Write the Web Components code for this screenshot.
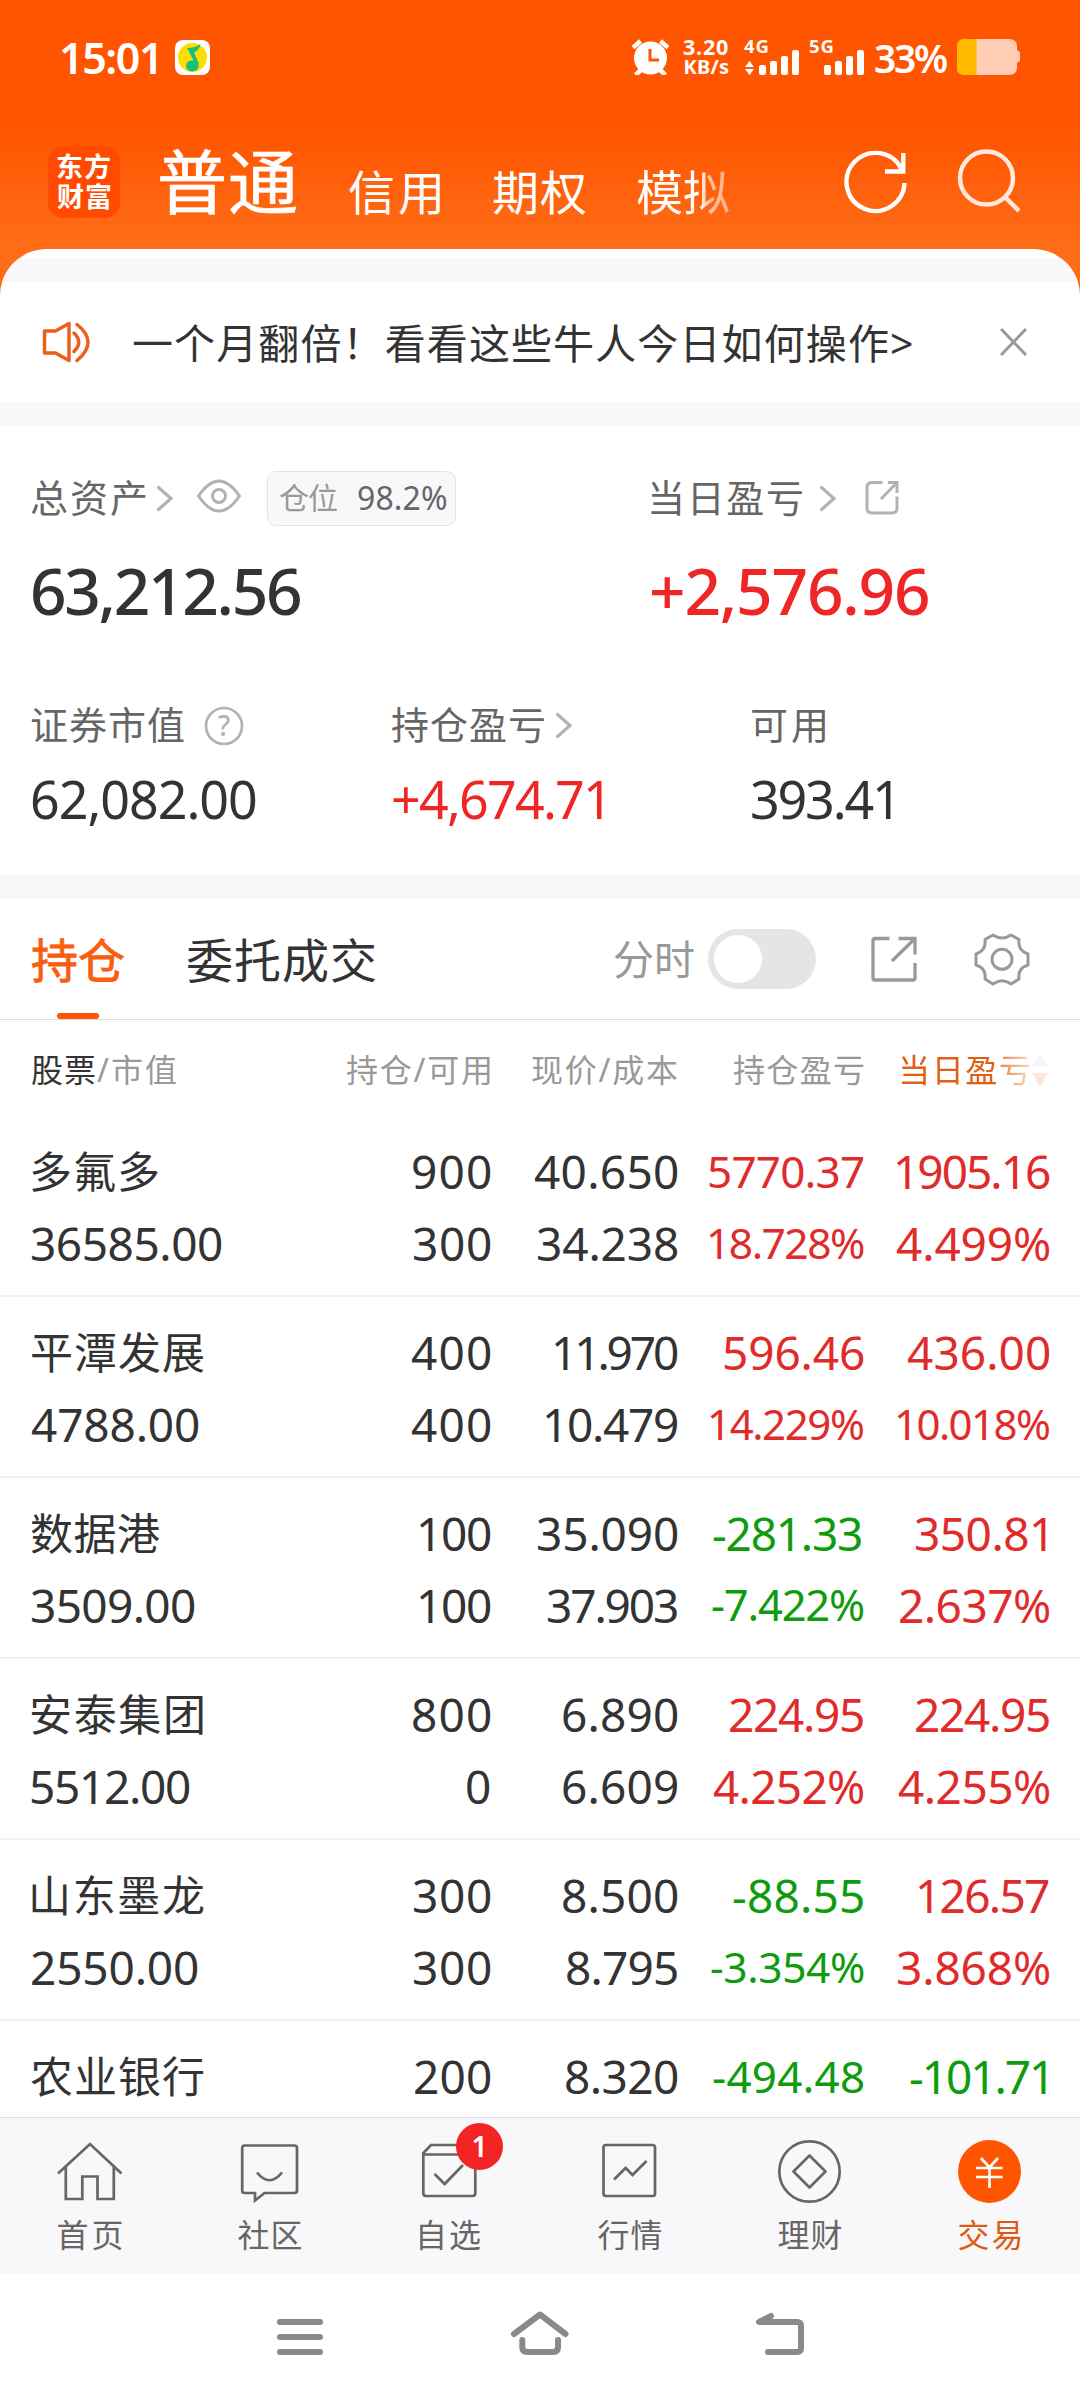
<!DOCTYPE html>
<html lang="zh-CN">
<head>
<meta charset="utf-8">
<title>持仓</title>
<style>
html,body{margin:0;padding:0;background:#fff}
body{width:1080px;height:2400px;overflow:hidden;font-family:"Noto Sans","Noto Sans CJK SC",sans-serif;color:#333}
</style>
</head>
<body>
<trade-app></trade-app>
<script>
function define(name, html, setup){
  const t=document.createElement('template');t.innerHTML=html;
  customElements.define(name,class extends HTMLElement{
    constructor(){super();this.attachShadow({mode:'open'}).append(t.content.cloneNode(true));}
    connectedCallback(){if(setup&&!this.ready){this.ready=true;setup(this,this.shadowRoot);}}
  });
}
const cv=document.createElement('canvas');cv.width=140;cv.height=120;
const cx=cv.getContext('2d',{willReadFrequently:true});
const cache=new Map();
/* Side bearings of one glyph, read from its drawn pixels. */
function bearings(font,ch){
  const key=font+ch;
  if(cache.has(key))return cache.get(key);
  cx.font=font;cx.clearRect(0,0,140,120);cx.fillStyle='#000';cx.fillText(ch,20,90);
  const d=cx.getImageData(0,0,140,120).data;let l=140,r=0;
  for(let y=0;y<120;y++)for(let x=0;x<140;x++)if(d[(y*140+x)*4+3]>90){if(x<l)l=x;if(x+1>r)r=x+1;}
  const res=[l-20,cx.measureText(ch).width-(r-20)];
  cache.set(key,res);return res;
}

/* Text whose box is exactly the ink of its glyphs, spaced to the width in "w". */
define('fit-text','<style>:host{display:block;line-height:1;white-space:nowrap;flex:none}span{display:block;font-kerning:none}</style><span><slot></slot></span>',(el,root)=>{
  const s=getComputedStyle(el),txt=el.textContent,w=+el.getAttribute('w');
  const font=`${s.fontWeight} ${s.fontSize} ${s.fontFamily}`,ch=[...txt],n=ch.length;
  if(!n)return;
  cx.font=font;
  let adv=0;for(const c of ch)adv+=cx.measureText(c).width;
  const l=bearings(font,ch[0])[0],rb=bearings(font,ch[n-1])[1];
  const ls=n>1?(w-(adv-l-rb))/(n-1):0,sp=root.querySelector('span');
  sp.style.letterSpacing=ls+'px';
  sp.style.marginLeft=-l+'px';
  el.style.width=w+'px';
});

define('status-bar',`<style>
:host{display:flex;align-items:center;height:114px;padding:0 60px 0 62px;color:#fff;box-sizing:border-box}
.clock{font-size:43px;font-weight:600}
.app{margin-left:19px}.space{flex:1}
.net{display:flex;flex-direction:column;align-items:flex-end;gap:0;margin:0 16px 0 15px;font-weight:700}
.net fit-text{line-height:20px;font-size:21.500px}.net .u{font-size:20px}
.g{font:700 18.500px "Noto Sans",sans-serif}
.pct{font-size:39px;font-weight:600;margin:0 10px 0 11px}
svg{display:block;flex:none}
</style>
<fit-text class="clock" w="94">15:01</fit-text>
<svg class="app" width="35" height="35" viewBox="175 39 35 35"><rect x="175" y="39" width="35" height="35" rx="8" fill="#fff"/><circle cx="192.500" cy="56.500" r="14.500" fill="#fedd00"/><path d="M187 47Q195 47 200.500 43Q199.500 49 194 51.500L198.500 61.500Q200 69.500 192.500 70.500Q186 70 186 64.500Q187 59 193.500 59.500Z" fill="#16c07c"/></svg>
<div class="space"></div>
<svg width="37" height="36" viewBox="632 39 37 36"><g stroke="#fff" stroke-width="4.500"><path d="M633 47.500L640.500 41M668 47.500L660.500 41M642 69L635.500 75M659 69L665.500 75"/></g><circle cx="650.500" cy="58" r="16.500" fill="#fff"/><path d="M650 49V60H659" fill="none" stroke="#ff5500" stroke-width="3"/></svg>
<div class="net"><fit-text w="44">3.20</fit-text><fit-text class="u" w="42.500">KB/s</fit-text></div>
<svg width="55" height="52" viewBox="744 31 55 52" fill="#fff"><text class="g" x="744" y="53" textLength="25">4G</text><path d="M745 67L749.500 61L754 67ZM745 69H754L749.500 75Z"/><rect x="759" y="65" width="7" height="10" rx="2"/><rect x="770" y="61" width="7" height="14" rx="2"/><rect x="781" y="56" width="7" height="19" rx="2"/><rect x="792" y="50" width="7" height="25" rx="2"/></svg>
<svg style="margin-left:10px" width="55" height="52" viewBox="809 31 55 52" fill="#fff"><text class="g" x="809" y="53" textLength="25">5G</text><rect x="824" y="65" width="7" height="10" rx="2"/><rect x="835" y="61" width="7" height="14" rx="2"/><rect x="846" y="56" width="7" height="19" rx="2"/><rect x="857" y="50" width="7" height="25" rx="2"/></svg>
<fit-text class="pct" w="72">33%</fit-text>
<svg width="63" height="36" viewBox="957 39 63 36"><path d="M965 39H1009Q1017 39 1017 47V50L1020 52V61L1017 63V67Q1017 75 1009 75H965Q957 75 957 67V47Q957 39 965 39Z" fill="#ffccb5"/><path d="M976.500 39H965Q957 39 957 47V67Q957 75 965 75H976.500Z" fill="#ffb900"/></svg>`);

define('app-header',`<style>
:host{display:flex;align-items:center;height:135px;padding:0 60px 0 48px;box-sizing:border-box;color:#fff}
.logo{width:72px;height:72px;border-radius:15px;background:#ff4a00;display:flex;flex-direction:column;align-items:center;justify-content:center;gap:3px;font-size:27px;font-weight:700;margin-right:40px}
.main{font-size:70px;-webkit-text-stroke:.7px #fff}
.sub{font-size:47px;padding-top:22px}
.fade{-webkit-mask-image:linear-gradient(90deg,#000 64%,rgba(0,0,0,.6) 80%,rgba(0,0,0,.5));mask-image:linear-gradient(90deg,#000 64%,rgba(0,0,0,.6) 80%,rgba(0,0,0,.5))}
.space{flex:1}svg{display:block;flex:none}
</style>
<div class="logo"><fit-text w="52">东方</fit-text><fit-text w="52">财富</fit-text></div>
<fit-text class="main" w="136">普通</fit-text>
<fit-text class="sub" w="90" style="margin-left:54px">信用</fit-text>
<fit-text class="sub" w="91" style="margin-left:54px">期权</fit-text>
<fit-text class="sub fade" w="91" style="margin-left:53px">模拟</fit-text>
<div class="space"></div>
<svg width="64" height="68" viewBox="844 148 64 68" fill="none" stroke="#fff" stroke-width="4.300"><path d="M904.500 183A29 29 0 1 1 901.500 169M903.300 153V171.500H885"/></svg>
<svg style="margin-left:49px" width="63" height="68" viewBox="957 148 63 68" fill="none" stroke="#ffe8dc" stroke-width="4.500"><circle cx="986.500" cy="178" r="26.500"/><path d="M1005.500 197.500L1019 211"/></svg>`);

define('notice-bar',`<style>
:host{display:flex;align-items:center;height:120px;padding:0 53px 0 42px;box-sizing:border-box;font-size:41px}
fit-text{margin-left:44px;padding-top:3px}.space{flex:1}svg{display:block}
</style>
<svg width="48" height="44" viewBox="42 320 48 44" fill="none" stroke="#ea5f1a" stroke-width="3.500" stroke-linejoin="round" stroke-linecap="round"><path d="M44.500 331H55.500L69 323.500V360.500L55.500 353H44.500ZM74 333Q83.500 342 74 351.500M77 324.500Q99 342 77 360.500"/></svg>
<fit-text w="778"></fit-text>
<div class="space"></div>
<svg width="27" height="28" viewBox="1000 329 27 28" stroke="#999" stroke-width="3"><path d="M1001 330L1026 356M1026 330L1001 356"/></svg>`,(el,root)=>{
  const f=root.querySelector('fit-text');f.textContent=el.getAttribute('text');f.ready=false;f.connectedCallback();
});

define('asset-panel',`<style>
:host{display:block;height:449px;padding:42px 0 0 32px;box-sizing:border-box;color:#333}
.top{display:grid;grid-template-columns:619px 1fr}
.low{display:grid;grid-template-columns:360px 360px 1fr;margin-top:61px}
.lab{display:flex;align-items:center;height:60px;color:#666;font-size:38px}
.lab>fit-text{padding-bottom:2px}
.lab svg{flex:none}
.big{display:flex;align-items:center;height:126px;font-size:64px;font-weight:500}
.top .big fit-text{margin-left:1px}
.low .lab{height:74px;margin-top:-28px;padding-top:1px;box-sizing:border-box}
.num{display:flex;align-items:center;height:76px;font-size:52px}
.red{color:#ee2726}
.pos{display:flex;align-items:center;justify-content:space-between;box-sizing:border-box;width:189px;height:55px;border:1.500px solid #e4e4e6;border-radius:9px;background:#f8f8fb;padding:0 9px 1px 12px;margin-left:25px;font-size:30px;color:#999}
.pos .p{font-size:32px;color:#666}
</style>
<div class="top">
 <div><div class="lab"><fit-text w="113">总资产</fit-text>
 <svg style="margin-left:11px" width="18" height="30" viewBox="156 483 18 30" fill="none" stroke="#b2b2b2" stroke-width="3.200" stroke-linecap="round"><path d="M158.500 487.500L171 498.500L158.500 509.500"/></svg>
 <svg style="margin-left:22px;margin-bottom:4px" width="46" height="34" viewBox="196 480 46 34" fill="none" stroke="#b2b2b2" stroke-width="3"><path d="M198.500 497Q219 467 239.500 497Q219 527 198.500 497Z" stroke-linejoin="round"/><circle cx="219" cy="497" r="6.500"/></svg>
 <div class="pos"><fit-text w="57">仓位</fit-text><fit-text class="p" w="87">98.2%</fit-text></div></div>
 <div class="big"><fit-text w="267">63,212.56</fit-text></div></div>
 <div><div class="lab"><fit-text w="151">当日盈亏</fit-text>
 <svg style="margin-left:17px" width="18" height="30" viewBox="819 483 18 30" fill="none" stroke="#b2b2b2" stroke-width="3.200" stroke-linecap="round"><path d="M821.500 487.500L834 498.500L821.500 509.500"/></svg>
 <svg style="margin-left:27px" width="36" height="36" viewBox="864 480 36 36" fill="none" stroke="#b2b2b2" stroke-width="3"><path d="M882.500 482.500H872Q867 482.500 867 487.500V508Q867 513 872 513H892Q897 513 897 508V496.500M888 482.500H897V493M897 482.500L881 499"/></svg></div>
 <div class="big red"><fit-text w="276">+2,576.96</fit-text></div></div>
</div>
<div class="low">
 <div><div class="lab"><fit-text w="152">证券市值</fit-text>
 <svg style="margin-left:20px;margin-top:2px" width="40" height="40" viewBox="204 706 40 40"><circle cx="224" cy="726" r="18" fill="none" stroke="#b2b2b2" stroke-width="2.700"/><text x="224" y="736" text-anchor="middle" font-size="28" font-weight="500" fill="#b2b2b2">?</text></svg></div>
 <div class="num"><fit-text w="222" style="margin-left:1px">62,082.00</fit-text></div></div>
 <div><div class="lab"><fit-text w="152">持仓盈亏</fit-text>
 <svg style="margin-left:11px" width="18" height="30" viewBox="156 483 18 30" fill="none" stroke="#b2b2b2" stroke-width="3.200" stroke-linecap="round"><path d="M158.500 487.500L171 498.500L158.500 509.500"/></svg></div>
 <div class="num red"><fit-text w="209" style="margin-left:1px">+4,674.71</fit-text></div></div>
 <div><div class="lab"><fit-text w="73">可用</fit-text></div>
 <div class="num"><fit-text w="139">393.41</fit-text></div></div>
</div>`);

define('hold-tabs',`<style>
:host{display:flex;height:121px;padding:0 49px 0 32px;box-sizing:border-box;border-bottom:1.500px solid #ddd;align-items:stretch;font-size:47px}
.tab{display:flex;flex-direction:column;align-items:center;justify-content:flex-end;margin-right:65px}
.tab fit-text{margin-bottom:29px}
.bar{width:42px;height:6px;border-radius:3px;background:#ff5500}
.tab:not(.on) .bar{background:transparent}
.on{color:#f95d10;-webkit-text-stroke:.8px #f95d10}.space{flex:1}
.tools{display:flex;align-items:center;color:#999;font-size:41px}
.sw{width:108px;height:60px;border-radius:30px;background:#e5e5e7;padding:6px;box-sizing:border-box;margin-left:14px}
.sw i{display:block;width:48px;height:48px;border-radius:50%;background:#fff}
svg{display:block}
</style>
<div class="tab on"><fit-text w="91">持仓</fit-text><div class="bar"></div></div>
<div class="tab"><fit-text w="187">委托成交</fit-text><div class="bar"></div></div>
<div class="space"></div>
<div class="tools"><fit-text w="79">分时</fit-text><div class="sw"><i></i></div>
<svg style="margin-left:54px" width="48" height="48" viewBox="870 935 48 48" fill="none" stroke="#999" stroke-width="3.300"><path d="M889.500 938.500H875Q873 938.500 873 940.500V978Q873 980 875 980H913Q915 980 915 978V963M898.500 938.500H915V954.500M915 938.500L892 961"/></svg>
<svg style="margin-left:55px" width="58" height="56" viewBox="973 931 58 56" fill="none" stroke="#999" stroke-width="3" stroke-linejoin="round"><circle cx="1002" cy="959.300" r="10"/><path d="M1011 935L1019 939.500Q1017.500 950.500 1028 954V965Q1017.500 968 1019 979L1011 984Q1002 977.500 993 984L985 979Q986.500 968 976 965V954Q986.500 950.500 985 939.500L993 935Q1002 941 1011 935Z"/></svg></div>`);

const GRID='display:grid;grid-template-columns:258px 200px 187px 186px 186px;padding-left:32px;';
define('hold-head',`<style>
:host{${GRID}height:96px;align-items:center;font-size:32px;color:#999;padding-top:3px;box-sizing:border-box}
:host>*{justify-self:end}
.n{justify-self:start;display:flex;gap:2px}.n .d{color:#333}
.s{display:flex;align-items:center;gap:3px;color:#e25f14;justify-self:end}
.s fit-text{-webkit-mask-image:linear-gradient(90deg,#000 74%,rgba(0,0,0,.75) 78%,rgba(0,0,0,.25));mask-image:linear-gradient(90deg,#000 74%,rgba(0,0,0,.75) 78%,rgba(0,0,0,.25))}
</style>
<div class="n"><fit-text class="d" w="63">股票</fit-text><fit-text w="79">/市值</fit-text></div>
<fit-text w="143">持仓/可用</fit-text><fit-text w="145">现价/成本</fit-text><fit-text w="129">持仓盈亏</fit-text>
<div class="s"><fit-text w="127">当日盈亏</fit-text><svg width="17" height="36" viewBox="1033 1051 17 36"><path d="M1033 1066L1041 1052L1049 1066Z" fill="#f5f5f5"/><path d="M1033 1072L1041 1086L1049 1072Z" fill="#ffe6da"/></svg></div>`);

/* One holding; each cell is "text|ink width", with an optional font size and right inset. */
define('hold-row',`<style>
:host{${GRID}grid-template-rows:72px 72px;align-items:center;height:181px;padding-top:19px;box-sizing:border-box;border-bottom:2px solid #f1f1f2;font-size:46px}
fit-text{justify-self:end}.a{justify-self:start}.name{font-size:43px}
.r{color:#e02b2b}.g{color:#0e9b0e}
</style>`,(el,root)=>{
  el.dataset.cells.split(';').forEach((c,i)=>{
    const [t,w,fs,inset]=c.split('|'),f=document.createElement('fit-text'),k=i%5;
    f.textContent=t;f.setAttribute('w',w);
    let cls=k===0?(i?'a':'a name'):'';
    if(k>2)cls=t[0]==='-'?'g':'r';
    f.className=cls;
    if(fs)f.style.fontSize=fs+'px';
    if(inset)f.style.marginRight=inset+'px';
    root.append(f);
  });
});

define('tab-item',`<style>
:host{display:flex;flex-direction:column;align-items:center;flex:1;padding-top:19px;color:#666;font-size:32px}
:host([on]){color:#df5a14}
.i{position:relative;height:70px}
::slotted(svg){display:block;fill:none;stroke:#666;stroke-width:2.700}
.l{margin-top:12px}
.b{position:absolute;left:41px;top:-14px;width:47px;height:47px;border-radius:50%;background:#f32424;color:#fff;font-size:28px;font-weight:600;line-height:46px;text-align:center}
.b:empty{display:none}
</style><div class="i"><slot></slot><div class="b"></div></div><fit-text class="l"></fit-text>`,(el,root)=>{
  root.querySelector('.b').textContent=el.getAttribute('badge')||'';
  const f=root.querySelector('.l');f.setAttribute('w',el.getAttribute('w')||63);
  f.textContent=el.getAttribute('label');f.ready=false;f.connectedCallback();
});

define('tab-bar',`<style>:host{display:flex;height:157px;box-sizing:border-box;border-top:1.500px solid #dededf;background:#f8f8fb}</style>
<tab-item label="首页"><svg width="70" height="70" viewBox="55 2137 70 70"><path d="M58 2173.500L90 2144L121.500 2173.500M65.800 2167V2199H82.300V2176.500H97.500V2199H113.800V2167"/></svg></tab-item>
<tab-item label="社区"><svg width="70" height="70" viewBox="235 2137 70 70"><path d="M244.500 2145.500H294.500Q297 2145.500 297 2148V2190.500Q297 2193 294.500 2193H264.500L255 2200.500V2193H244.500Q242.200 2193 242.200 2190.500V2148Q242.200 2145.500 244.500 2145.500Z"/><path d="M257 2172.500Q269.500 2188 282 2172.500"/></svg></tab-item>
<tab-item label="自选" badge="1" w="60"><svg width="70" height="70" viewBox="415 2137 70 70"><path d="M423.300 2154.500H475.300V2193Q475.300 2196 472.500 2196H426Q423.300 2196 423.300 2193V2153L431 2145H467.500L475.300 2153V2156M434.500 2174L444.700 2184L463 2165"/></svg></tab-item>
<tab-item label="行情"><svg width="70" height="70" viewBox="595 2137 70 70"><rect x="603.500" y="2145" width="51.500" height="51" rx="2.500"/><path d="M614 2179.500L625.700 2168L632.500 2175L646.500 2161"/></svg></tab-item>
<tab-item label="理财"><svg width="70" height="70" viewBox="775 2137 70 70"><circle cx="809.500" cy="2171.500" r="30.200"/><path d="M809.500 2155.500L825.500 2171.500L809.500 2187.500L793.500 2171.500Z" stroke-linejoin="round"/></svg></tab-item>
<tab-item label="交易" on w="61"><svg width="70" height="70" viewBox="955 2137 70 70"><circle cx="989.500" cy="2171.500" r="31.500" fill="#ff5500" stroke="none"/><path d="M981 2158L989.500 2167.500L998 2158M976 2168H1002.500M976 2177H1002.500M989.500 2167V2188" stroke="#fff"/></svg></tab-item>`);

define('system-nav',`<style>:host{display:flex;justify-content:center;height:126px;align-items:center}svg{display:block;fill:none;stroke:#8a8a8a;stroke-width:6;stroke-linecap:round;stroke-linejoin:round}</style>
<svg width="560" height="60" viewBox="260 2307 560 60"><path d="M280 2322H320M280 2337H320M280 2352H320"/><path d="M514 2334L540 2314.500L565.500 2334M522.300 2340V2347Q522.300 2352 527.300 2352H553Q558 2352 558 2347V2340"/><path d="M771 2316L759 2322H797Q801 2322 801 2326V2348Q801 2352 797 2352H768"/></svg>`);

define('trade-app',`<style>
:host{display:flex;flex-direction:column;width:1080px;height:2400px;background:linear-gradient(#ff5500 0,#ff5500 128px,#ff6d18 248px,#ff6d18 320px,#fff 320px)}
.card{background:#fff;border-radius:47px 47px 0 0;overflow:hidden;flex:none;height:1868px;display:flex;flex-direction:column}
.card>*{flex:none}
.gap{height:24px;background:#f8f8fb}
.first{margin-top:9px}
</style>
<status-bar></status-bar><app-header></app-header>
<div class="card">
<div class="gap first"></div>
<notice-bar text="一个月翻倍！看看这些牛人今日如何操作&gt;"></notice-bar>
<div class="gap"></div>
<asset-panel></asset-panel>
<div class="gap"></div>
<hold-tabs></hold-tabs>
<hold-head></hold-head>
<hold-row data-cells="多氟多|126;900|77;40.650|142;5770.37|153|44;1905.16|152;36585.00|189;300|76;34.238|139;18.728%|153|42.5;4.499%|152"></hold-row>
<hold-row data-cells="平潭发展|171;400|78;11.970|122;596.46|138;436.00|141;4788.00|166;400|78;10.479|131;14.229%|152|42;10.018%|151|42"></hold-row>
<hold-row data-cells="数据港|127;100|70;35.090|139;-281.33|147||2;350.81|129||4;3509.00|162;100|70;37.903|129;-7.422%|150|43.5;2.637%|149"></hold-row>
<hold-row data-cells="安泰集团|171;800|77;6.890|114;224.95|133;224.95|133;5512.00|157;0|23;6.609|114;4.252%|149;4.255%|150"></hold-row>
<hold-row data-cells="山东墨龙|171;300|76;8.500|114;-88.55|129;126.57|129||1;2550.00|165;300|76;8.795|110;-3.354%|151|42.5;3.868%|151"></hold-row>
<hold-row data-cells="农业银行|171;200|75;8.320|111;-494.48|149|44;-101.71|134||4"></hold-row>
</div>
<tab-bar></tab-bar><system-nav></system-nav>`);
</script>
</body>
</html>
